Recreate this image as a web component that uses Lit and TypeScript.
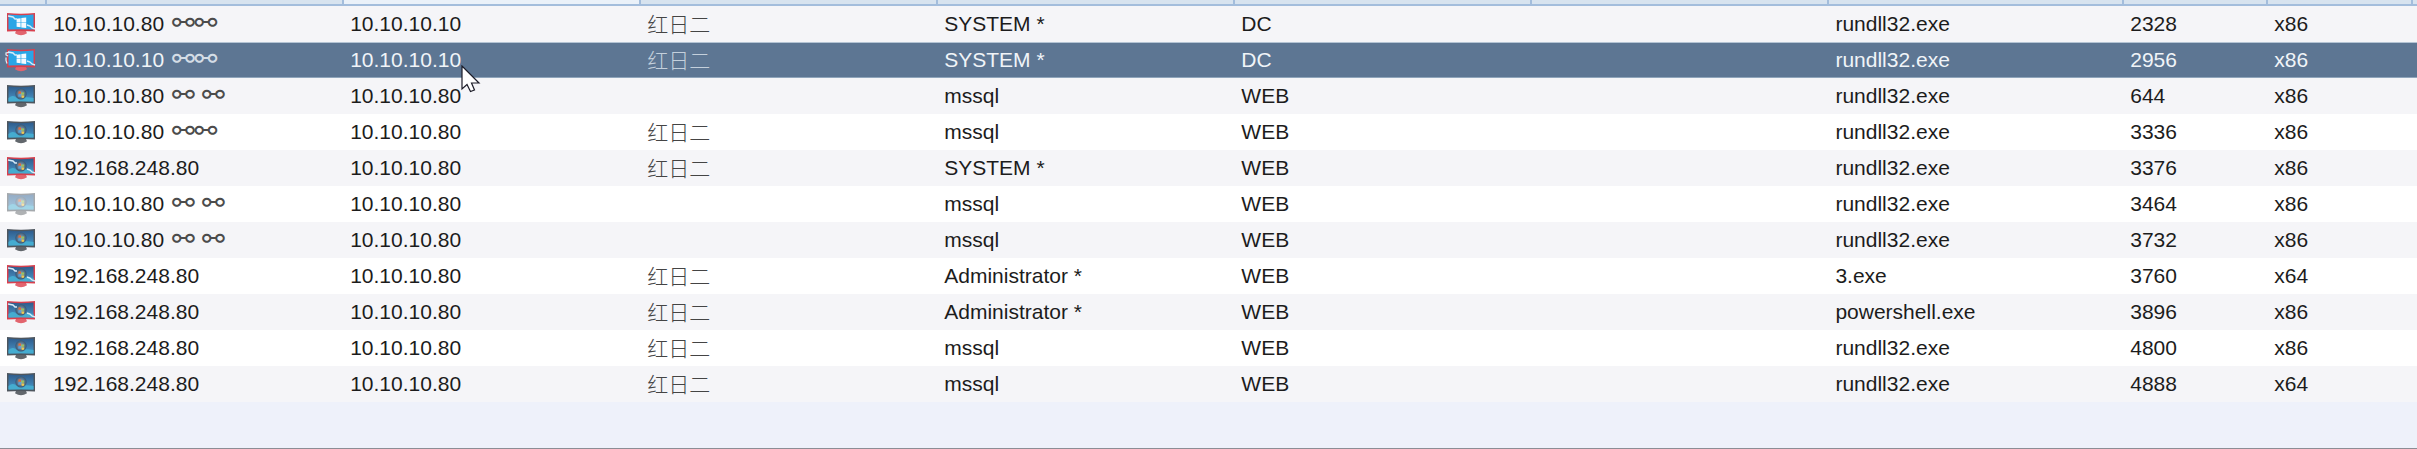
import { LitElement, html, css, svg, nothing } from "lit";
import { customElement, property, state } from "lit/decorators.js";

type Kind = "win10" | "win7" | "win7-admin" | "win7-dim" | "win10-hot";

interface Session {
  kind: Kind;
  external: string;
  links?: string;
  internal: string;
  listener: string;
  user: string;
  computer: string;
  note: string;
  process: string;
  pid: number;
  arch: string;
}

const s = (kind: Kind, external: string, links: string, internal: string, listener: string,
  user: string, computer: string, process: string, pid: number, arch: string): Session =>
  ({ kind, external, links, internal, listener, user, computer, note: "", process, pid, arch });

const SESSIONS: Session[] = [
  s("win10", "10.10.10.80", "⚯⚯", "10.10.10.10", "红日二", "SYSTEM *", "DC", "rundll32.exe", 2328, "x86"),
  s("win10-hot", "10.10.10.10", "⚯⚯", "10.10.10.10", "红日二", "SYSTEM *", "DC", "rundll32.exe", 2956, "x86"),
  s("win7", "10.10.10.80", "⚯ ⚯", "10.10.10.80", "", "mssql", "WEB", "rundll32.exe", 644, "x86"),
  s("win7", "10.10.10.80", "⚯⚯", "10.10.10.80", "红日二", "mssql", "WEB", "rundll32.exe", 3336, "x86"),
  s("win7-admin", "192.168.248.80", "", "10.10.10.80", "红日二", "SYSTEM *", "WEB", "rundll32.exe", 3376, "x86"),
  s("win7-dim", "10.10.10.80", "⚯ ⚯", "10.10.10.80", "", "mssql", "WEB", "rundll32.exe", 3464, "x86"),
  s("win7", "10.10.10.80", "⚯ ⚯", "10.10.10.80", "", "mssql", "WEB", "rundll32.exe", 3732, "x86"),
  s("win7-admin", "192.168.248.80", "", "10.10.10.80", "红日二", "Administrator *", "WEB", "3.exe", 3760, "x64"),
  s("win7-admin", "192.168.248.80", "", "10.10.10.80", "红日二", "Administrator *", "WEB", "powershell.exe", 3896, "x86"),
  s("win7", "192.168.248.80", "", "10.10.10.80", "红日二", "mssql", "WEB", "rundll32.exe", 4800, "x86"),
  s("win7", "192.168.248.80", "", "10.10.10.80", "红日二", "mssql", "WEB", "rundll32.exe", 4888, "x64"),
];

@customElement("host-icon")
export class HostIcon extends LitElement {
  @property() kind: Kind = "win7";

  static styles = css`
    :host { display: block; }
    svg { display: block; width: 32px; height: 24px; }
    .dim { opacity: 0.5; }
  `;

  render() {
    const ten = this.kind.startsWith("win10");
    const red = ten || this.kind === "win7-admin";
    const frame = red ? "#d8404e" : "#4e565e";
    const stand = red ? "#e2646e" : "#62676c";
    return html`
      <svg class=${this.kind === "win7-dim" ? "dim" : ""} viewBox="0 0 32 24" aria-hidden="true">
        <defs>
          <linearGradient id="seven" x1="0" y1="0" x2="0" y2="1">
            <stop offset="0" stop-color="#2f5c8c" />
            <stop offset="0.6" stop-color="#3f7fb0" />
            <stop offset="1" stop-color="#3fa0cc" />
          </linearGradient>
          <radialGradient id="orb">
            <stop offset="0" stop-color="#8fb0c8" />
            <stop offset="1" stop-color="#38546f" />
          </radialGradient>
        </defs>
        <path d="M11 19h10l1 2.200q-6 4-12 0z" fill=${stand} />
        <path d="M2 1Q16 2.400 30 1V19.600Q16 18.600 2 19.600z" fill=${frame} />
        <path d="M3.500 2.600Q16 4 28.500 2.600V17.600Q16 16.800 3.500 17.600z" fill=${ten ? "#2aa6e6" : "url(#seven)"} />
        ${ten
          ? svg`<path d="M11.600 6.800l4-.6v4.200h-4zM16.300 6.100l4.900-.7v5h-4.900zM11.600 11.100h4v4.200l-4-.6zM16.300 11.100h4.900v5l-4.900-.7z" fill="#f4fbff" />`
          : svg`
            <path d="M3.500 14q4-3.500 7-1t6 1 12 0V17.600Q16 16.800 3.500 17.600z" fill="#45acd0" />
            <circle cx="16" cy="10" r="5.600" fill="url(#orb)" />
            <path d="M13.400 7.600q1.400-.8 2.600 0v2.400q-1.200-.8-2.600 0z" fill="#e0683c" />
            <path d="M16.500 8.200q1.300.8 2.700 0v2.400q-1.400.8-2.700 0z" fill="#9cc25a" />
            <path d="M13.400 10.600q1.400-.8 2.600 0V13q-1.200-.8-2.600 0z" fill="#5a9fd8" />
            <path d="M16.500 11.200q1.300.8 2.700 0v2.400q-1.400.8-2.700 0z" fill="#f0c850" />`}
        ${red
          ? svg`<path d="M3 4l5 1 2 2 2 0M22 13l3 1 2 2 3 1" fill="none" stroke="#d8ecf8" stroke-width="1.400" />`
          : nothing}
        ${this.kind === "win10-hot"
          ? svg`<path d="M3 8L1 7V5l3-.6M1 9.500v3l1 3" fill="none" stroke="#e6eef6" stroke-width="1.200" />`
          : nothing}
      </svg>
    `;
  }
}

@customElement("app-root")
export class AppRoot extends LitElement {
  @state() private selected = 1;

  static styles = css`
    :host {
      display: block;
      background: #eef1fa;
      color: #1c1c1c;
      font: 21px/36px "Liberation Sans", Arial, "Noto Sans CJK SC", sans-serif;
    }
    .pane {
      box-sizing: border-box;
      min-height: 100vh;
      border-bottom: 1px solid #8c8d94;
    }
    table { width: 100%; table-layout: fixed; border-collapse: separate; border-spacing: 0; }
    .c-icon { width: 1.95%; }
    .c-wide { width: 12.29%; }
    .c-proc { width: 12.2%; }
    .c-pid { width: 5.96%; }
    .c-arch { width: 6%; }
    th {
      box-sizing: border-box;
      height: 6px;
      padding: 0;
      background: #d7e3ef;
      border-right: 2px solid #a3bddc;
      border-bottom: 2px solid #a3bddc;
    }
    th.hover { background: #eaf1f9; }
    th:last-child { border-right: 0; }
    td {
      box-sizing: border-box;
      height: 36px;
      padding: 0 0 0 6px;
      white-space: nowrap;
      background: #ffffff;
    }
    tbody tr:nth-child(odd) td { background: #f5f5f8; }
    tbody tr.selected td {
      background: #5d7693;
      color: #f0f4f8;
      box-shadow: inset 0 1px #b4c4d4, inset 0 -1px #8fa5bb;
    }
    td.icon { padding-left: 5px; }
    .links {
      margin-left: 2px;
      font-family: "Liberation Sans", "DejaVu Sans", sans-serif;
      font-size: 27px;
      line-height: 20px;
      vertical-align: -1px;
      color: #4c4c4c;
    }
    tr.selected .links { color: #d4dde6; }
    td.cjk {
      font-family: "Noto Sans CJK SC", sans-serif;
      font-size: 21px;
      font-weight: 300;
      line-height: 34px;
      padding-bottom: 2px;
      color: #444444;
    }
    tbody tr.selected td.cjk { color: #c4d0dc; }
    .anchor { position: relative; }
    .cursor { position: absolute; left: 117px; top: 23px; width: 20px; height: 28px; z-index: 1; }
  `;

  private row(r: Session, i: number) {
    const on = i === this.selected;
    return html`
      <tr class=${on ? "selected" : ""} aria-selected=${on} @click=${() => (this.selected = i)}>
        <td class="icon"><host-icon .kind=${r.kind}></host-icon></td>
        <td>${r.external}${r.links ? html` <span class="links">${r.links}</span>` : nothing}</td>
        <td class="anchor">${r.internal}${i === 1
          ? html`<svg class="cursor" viewBox="0 0 20 28" aria-hidden="true">
              <path d="M1 1V24L6 19.500L9.500 26.500L13.500 25L10.500 18H18z" fill="#ffffff" stroke="#1c1c28" stroke-width="1.200" />
            </svg>`
          : nothing}</td>
        <td class="cjk">${r.listener}</td>
        <td>${r.user}</td>
        <td>${r.computer}</td>
        <td>${r.note}</td>
        <td>${r.process}</td>
        <td>${r.pid}</td>
        <td>${r.arch}</td>
        <td></td>
      </tr>
    `;
  }

  render() {
    return html`
      <div class="pane">
        <table>
          <colgroup>
            <col class="c-icon" />
            <col class="c-wide" span="6" />
            <col class="c-proc" />
            <col class="c-pid" />
            <col class="c-arch" />
            <col />
          </colgroup>
          <thead>
            <tr>
              ${[0, 1, 2, 3, 4, 5, 6, 7, 8, 9, 10].map((n) => html`<th class=${n === 2 ? "hover" : ""}></th>`)}
            </tr>
          </thead>
          <tbody>
            ${SESSIONS.map((r, i) => this.row(r, i))}
          </tbody>
        </table>
      </div>
    `;
  }
}
